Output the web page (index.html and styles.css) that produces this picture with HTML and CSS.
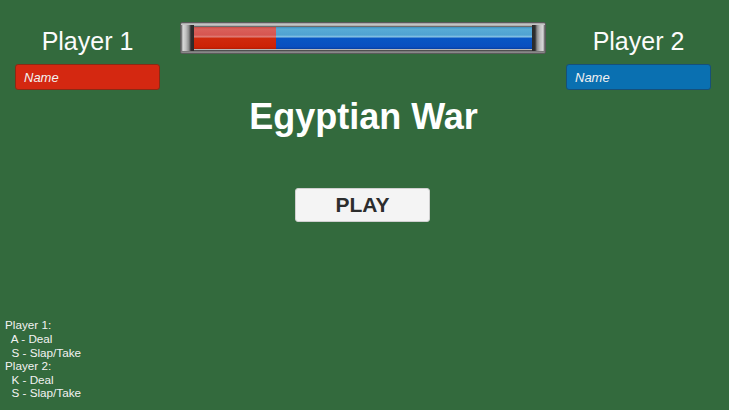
FILE: index.html
```html
<!DOCTYPE html>
<html>
<head>
<meta charset="utf-8">
<link rel="stylesheet" href="styles.css">
</head>
<body>
<div class="screen">
  <header class="top">
    <div class="player">
      <div class="player-label">Player 1</div>
      <div class="name-field red">Name</div>
    </div>
    <div class="bar-frame">
      <div class="cap cap-left"></div>
      <div class="bar">
        <div class="bar-red" style="width:24.2%"></div>
        <div class="bar-blue"></div>
      </div>
      <div class="cap cap-right"></div>
    </div>
    <div class="player">
      <div class="player-label">Player 2</div>
      <div class="name-field blue">Name</div>
    </div>
  </header>
  <h1 class="title">Egyptian War</h1>
  <button class="play">PLAY</button>
  <div class="help">Player 1:
  A - Deal
  S - Slap/Take
Player 2:
  K - Deal
  S - Slap/Take</div>
</div>
</body>
</html>
```
FILE: styles.css
```css
html, body {
  margin: 0;
  padding: 0;
}
body {
  background: #336a3d;
  font-family: "Liberation Sans", Arial, sans-serif;
  color: #fff;
}
.screen {
  width: 729px;
  height: 410px;
  display: flex;
  flex-direction: column;
  align-items: center;
  overflow: hidden;
}
.top {
  align-self: stretch;
  display: grid;
  grid-template-columns: 145px 1fr 145px;
  column-gap: 20px;
  padding: 0 18px 0 15px;
  align-items: start;
}
.player {
  display: flex;
  flex-direction: column;
  padding-top: 26px;
}
.player-label {
  font-size: 25px;
  line-height: 30px;
  text-align: center;
  color: #fbfbfb;
}
.name-field {
  margin-top: 8px;
  height: 26px;
  box-sizing: border-box;
  border-radius: 3px;
  display: flex;
  align-items: center;
  padding-left: 8px;
  font-style: italic;
  font-size: 13px;
  color: #f2f2f2;
}
.name-field.red {
  background: #d42811;
  border: 1px solid #8a2a14;
}
.name-field.blue {
  background: #0a70b1;
  border: 1px solid #16507a;
}
.bar-frame {
  margin-top: 22px;
  height: 32px;
  box-sizing: border-box;
  display: flex;
  align-items: stretch;
  background: linear-gradient(#9a9a9a 0, #d2d2d2 2px, #4a4a4a 4px, #3a3a3a 27px, #8e8e8e 29px, #6c6c6c 32px);
  border: 1px solid #5a5a5a;
  border-radius: 2px;
}
.cap {
  width: 13px;
  margin: 2px 0;
}
.cap-left {
  background: linear-gradient(90deg, #555 0, #d9d9d9 2px, #bfbfbf 5px, #8a8a8a 8px, #2e2e2e 10px, #2a2a2a 13px);
}
.cap-right {
  background: linear-gradient(270deg, #555 0, #d9d9d9 2px, #bfbfbf 5px, #8a8a8a 8px, #2e2e2e 10px, #2a2a2a 13px);
}
.bar {
  flex: 1;
  margin: 4px 0;
  display: flex;
  box-shadow: 0 1px 0 #b8b8b8;
}
.bar-red {
  background: linear-gradient(#c64a44 0, #d9605a 2px, #d65550 8px, #e0837d 10px, #cf2a0e 11px, #cc2206 20px, #b01d06 22px);
}
.bar-blue {
  flex: 1;
  background: linear-gradient(#3f8fbd 0, #58acd6 2px, #4fa3d2 8px, #8ec8e6 10px, #0857c4 11px, #0a4fbf 20px, #083fa0 22px);
}
.title {
  margin: 7px 2px 0 0;
  font-size: 36px;
  line-height: 40px;
  font-weight: bold;
  color: #fff;
}
.play {
  margin: 51px 4px 0 0;
  width: 135px;
  height: 34px;
  border: 1px solid #cfcfcf;
  border-radius: 3px;
  background: #f4f4f4;
  font-family: "Liberation Sans", Arial, sans-serif;
  font-weight: bold;
  font-size: 21px;
  color: #2d2d2d;
  padding: 0;
}
.help {
  margin-top: auto;
  align-self: stretch;
  padding: 0 0 10px 5px;
  white-space: pre;
  font-size: 11.7px;
  line-height: 13.6px;
  color: #f2f2f2;
}
```
